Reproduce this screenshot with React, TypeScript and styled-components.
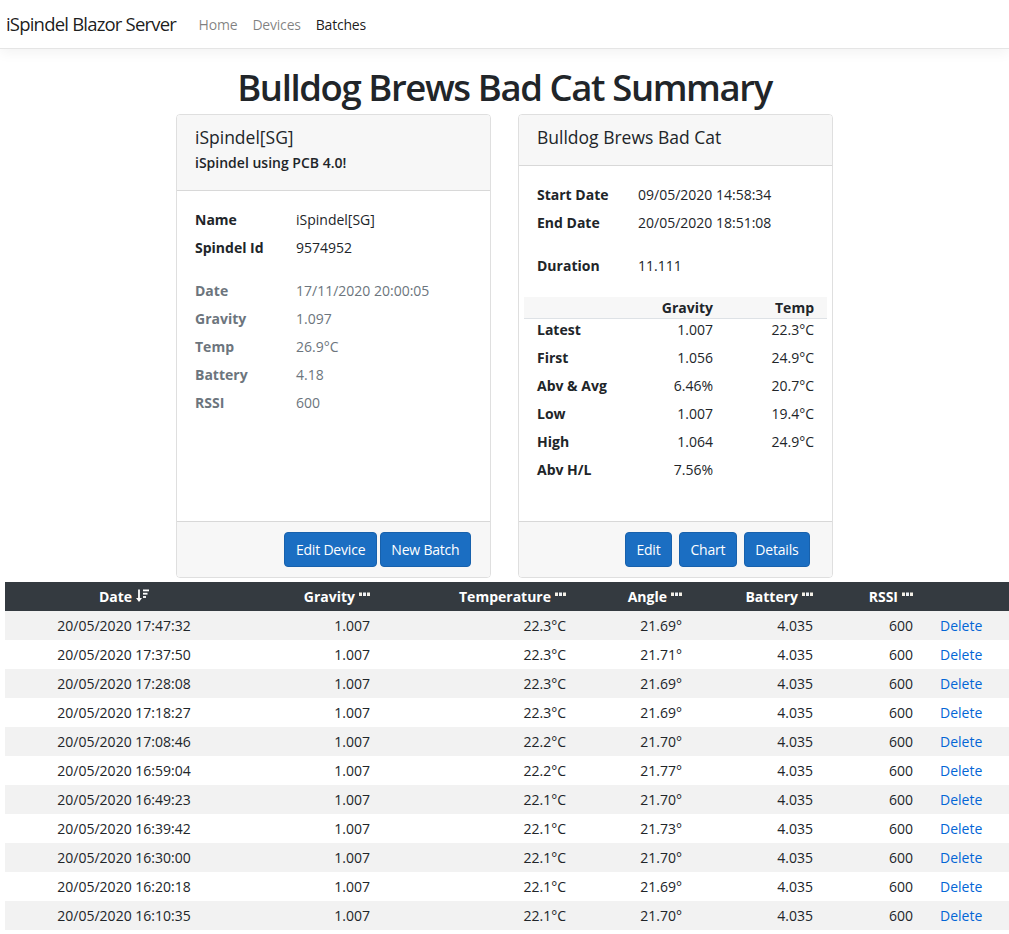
import React from 'react';
import styled, { createGlobalStyle } from 'styled-components';

const GlobalStyle = createGlobalStyle`
  html, body { margin: 0; padding: 0; background: #fff; }
  body {
    font-family: "Open Sans", "Noto Sans", "DejaVu Sans", sans-serif;
    font-size: 14px;
    line-height: 1.5;
    color: #212529;
  }
  * { box-sizing: border-box; }
`;

const NavBar = styled.nav`
  height: 49px;
  display: flex;
  align-items: center;
  padding: 0 6px;
  border-bottom: 1px solid #e5e5e5;
  box-shadow: 0 4px 12px rgba(0, 0, 0, 0.05);
`;

const Brand = styled.a`
  font-size: 18.5px;
  letter-spacing: -0.8px;
  color: rgba(0, 0, 0, 0.9);
  text-decoration: none;
  margin-right: 15px;
`;

const NavLink = styled.a<{ $active?: boolean }>`
  padding: 0 7.5px;
  font-size: 14px;
  letter-spacing: -0.2px;
  text-decoration: none;
  color: ${(p) => (p.$active ? 'rgba(0,0,0,0.9)' : 'rgba(0,0,0,0.5)')};
`;

const Title = styled.h1`
  margin: 15px 0 4px;
  height: 46px;
  text-align: center;
  font-size: 36.5px;
  font-weight: 600;
  letter-spacing: -1.4px;
  line-height: 46px;
`;

const CardRow = styled.div`
  display: flex;
  justify-content: center;
  gap: 27px;
`;

const Card = styled.div`
  width: 315px;
  height: 464px;
  display: flex;
  flex-direction: column;
  border: 1px solid rgba(0, 0, 0, 0.125);
  border-radius: 4px;
  overflow: hidden;
`;

const CardHeader = styled.div`
  background: #f7f7f7;
  border-bottom: 1px solid rgba(0, 0, 0, 0.125);
  padding: 11px 18px 17px;
`;

const CardTitle = styled.div`
  font-size: 17.5px;
  font-weight: 500;
  line-height: 22px;
`;

const CardSubtitle = styled.div`
  margin-top: 4px;
  font-size: 14px;
  font-weight: 600;
  line-height: 21px;
`;

const CardBody = styled.div`
  flex: 1;
  padding: 18px;
`;

const InfoList = styled.dl<{ $muted?: boolean }>`
  display: grid;
  grid-template-columns: 101px 1fr;
  row-gap: 7px;
  margin: 0 0 22px;
  line-height: 21px;
  color: ${(p) => (p.$muted ? '#6c757d' : '#212529')};
  dt { font-weight: 700; }
  dd { margin: 0; }
`;

const StatsTable = styled.table`
  width: calc(100% + 26px);
  margin: -1px -13px 0;
  border-collapse: collapse;
  table-layout: fixed;
  line-height: 21px;
  th {
    background: #f7f7f7;
    border-bottom: 1px solid #dee2e6;
    font-weight: 700;
    text-align: right;
    padding: 0 13px;
  }
  td {
    padding: 0 13px 7px;
    text-align: right;
  }
  td:first-child { text-align: left; font-weight: 700; }
`;

const CardFooter = styled.div<{ $gap: number; $right: number }>`
  display: flex;
  justify-content: flex-end;
  gap: ${(p) => p.$gap}px;
  padding: 10px ${(p) => p.$right}px 10px 20px;
  background: #f7f7f7;
  border-top: 1px solid rgba(0, 0, 0, 0.125);
`;

const Button = styled.button`
  height: 35px;
  padding: 0 10.5px;
  font-family: inherit;
  font-size: 14px;
  letter-spacing: -0.2px;
  color: #fff;
  background: #1b6ec2;
  border: 1px solid #1861ac;
  border-radius: 4px;
`;

const TableWrap = styled.div`
  margin: 4px 0 0 5px;
`;

const DataTable = styled.table`
  width: 100%;
  border-collapse: collapse;
  table-layout: fixed;
  line-height: 21px;
  th {
    background: #343a40;
    color: #fff;
    font-weight: 700;
    padding: 4px;
    text-align: right;
    white-space: nowrap;
  }
  td {
    padding: 4px;
    text-align: right;
    white-space: nowrap;
  }
  th:first-child, td:first-child { text-align: center; }
  tbody tr:nth-child(odd) { background: #f2f2f2; }
`;

const DeleteCell = styled.td`
  && { text-align: left; padding-left: 23px; }
`;

const DeleteLink = styled.a`
  color: #0366d6;
  text-decoration: none;
`;

const SortDots = () => (
  <svg width="11" height="10" viewBox="0 0 11 10" style={{ marginLeft: 4, verticalAlign: '1px' }}>
    <rect x="0" y="1.5" width="3" height="3.5" fill="#f3efe6" />
    <rect x="4" y="1.5" width="3" height="3.5" fill="#eef1f6" />
    <rect x="8" y="1.5" width="3" height="3.5" fill="#f3efe6" />
  </svg>
);

const SortDown = () => (
  <svg width="13" height="14" viewBox="0 0 13 14" style={{ marginLeft: 4, verticalAlign: '-1px' }}>
    <path d="M3 0.5v11" stroke="#fff" strokeWidth="1.8" />
    <path d="M0 9l3 4 3-4z" fill="#fff" />
    <rect x="7" y="0.5" width="6" height="1.8" fill="#fff" />
    <rect x="7" y="3.8" width="4.5" height="1.8" fill="#fff" />
    <rect x="7" y="7.1" width="3" height="1.8" fill="#fff" />
  </svg>
);

const rows: [string, string, string, string][] = [
  ['20/05/2020 17:47:32', '1.007', '22.3°C', '21.69°'],
  ['20/05/2020 17:37:50', '1.007', '22.3°C', '21.71°'],
  ['20/05/2020 17:28:08', '1.007', '22.3°C', '21.69°'],
  ['20/05/2020 17:18:27', '1.007', '22.3°C', '21.69°'],
  ['20/05/2020 17:08:46', '1.007', '22.2°C', '21.70°'],
  ['20/05/2020 16:59:04', '1.007', '22.2°C', '21.77°'],
  ['20/05/2020 16:49:23', '1.007', '22.1°C', '21.70°'],
  ['20/05/2020 16:39:42', '1.007', '22.1°C', '21.73°'],
  ['20/05/2020 16:30:00', '1.007', '22.1°C', '21.70°'],
  ['20/05/2020 16:20:18', '1.007', '22.1°C', '21.69°'],
  ['20/05/2020 16:10:35', '1.007', '22.1°C', '21.70°'],
];

const stats: [string, string, string][] = [
  ['Latest', '1.007', '22.3°C'],
  ['First', '1.056', '24.9°C'],
  ['Abv & Avg', '6.46%', '20.7°C'],
  ['Low', '1.007', '19.4°C'],
  ['High', '1.064', '24.9°C'],
  ['Abv H/L', '7.56%', ''],
];

export default function App() {
  return (
    <>
      <GlobalStyle />
      <NavBar>
        <Brand href="#">iSpindel Blazor Server</Brand>
        <NavLink href="#">Home</NavLink>
        <NavLink href="#">Devices</NavLink>
        <NavLink href="#" $active>Batches</NavLink>
      </NavBar>
      <Title>Bulldog Brews Bad Cat Summary</Title>
      <CardRow>
        <Card>
          <CardHeader>
            <CardTitle>iSpindel[SG]</CardTitle>
            <CardSubtitle>iSpindel using PCB 4.0!</CardSubtitle>
          </CardHeader>
          <CardBody>
            <InfoList>
              <dt>Name</dt><dd>iSpindel[SG]</dd>
              <dt>Spindel Id</dt><dd>9574952</dd>
            </InfoList>
            <InfoList $muted>
              <dt>Date</dt><dd>17/11/2020 20:00:05</dd>
              <dt>Gravity</dt><dd>1.097</dd>
              <dt>Temp</dt><dd>26.9°C</dd>
              <dt>Battery</dt><dd>4.18</dd>
              <dt>RSSI</dt><dd>600</dd>
            </InfoList>
          </CardBody>
          <CardFooter $gap={3} $right={19}>
            <Button>Edit Device</Button>
            <Button>New Batch</Button>
          </CardFooter>
        </Card>
        <Card>
          <CardHeader>
            <CardTitle>Bulldog Brews Bad Cat</CardTitle>
          </CardHeader>
          <CardBody>
            <InfoList>
              <dt>Start Date</dt><dd>09/05/2020 14:58:34</dd>
              <dt>End Date</dt><dd>20/05/2020 18:51:08</dd>
            </InfoList>
            <InfoList>
              <dt>Duration</dt><dd>11.111</dd>
            </InfoList>
            <StatsTable>
              <thead>
                <tr><th></th><th>Gravity</th><th>Temp</th></tr>
              </thead>
              <tbody>
                {stats.map(([l, g, t]) => (
                  <tr key={l}><td>{l}</td><td>{g}</td><td>{t}</td></tr>
                ))}
              </tbody>
            </StatsTable>
          </CardBody>
          <CardFooter $gap={7} $right={22}>
            <Button>Edit</Button>
            <Button>Chart</Button>
            <Button>Details</Button>
          </CardFooter>
        </Card>
      </CardRow>
      <TableWrap>
        <DataTable>
          <colgroup>
            <col style={{ width: 238 }} />
            <col style={{ width: 131 }} />
            <col style={{ width: 196 }} />
            <col style={{ width: 116 }} />
            <col style={{ width: 131 }} />
            <col style={{ width: 100 }} />
            <col />
          </colgroup>
          <thead>
            <tr>
              <th>Date<SortDown /></th>
              <th>Gravity<SortDots /></th>
              <th>Temperature<SortDots /></th>
              <th>Angle<SortDots /></th>
              <th>Battery<SortDots /></th>
              <th>RSSI<SortDots /></th>
              <th></th>
            </tr>
          </thead>
          <tbody>
            {rows.map(([d, g, t, a]) => (
              <tr key={d}>
                <td>{d}</td>
                <td>{g}</td>
                <td>{t}</td>
                <td>{a}</td>
                <td>4.035</td>
                <td>600</td>
                <DeleteCell><DeleteLink href="#">Delete</DeleteLink></DeleteCell>
              </tr>
            ))}
          </tbody>
        </DataTable>
      </TableWrap>
    </>
  );
}
